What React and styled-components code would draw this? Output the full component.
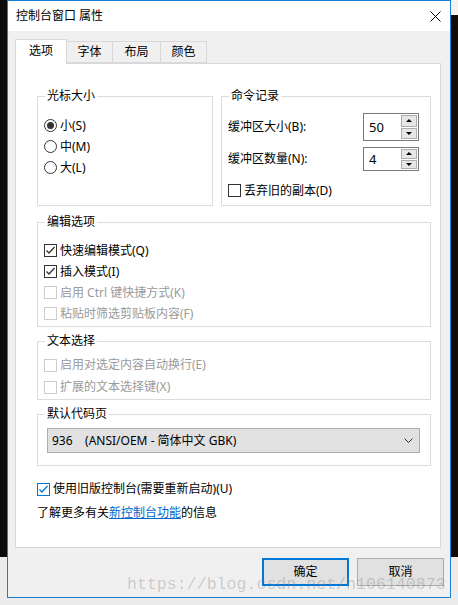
import React from 'react';
import styled, { createGlobalStyle } from 'styled-components';

// shared look
const ui = {
  font: '"Noto Sans", "Noto Sans CJK SC", sans-serif',
  text: '#000',
  disabled: '#9a9a9a',
  frame: '#dcdcdc',
  tabLine: '#d9d9d9',
  buttonFace: '#e1e1e1',
  buttonLine: '#adadad',
  accent: '#0078d7',
};

const GlobalStyle = createGlobalStyle`
  html, body {
    margin: 0;
    padding: 0;
    background: #0c0c0c;
  }
  body {
    font-family: ${ui.font};
    font-size: 12px;
    color: ${ui.text};
  }
`;

const Desktop = styled.div`
  position: relative;
  width: 458px;
  height: 605px;
  overflow: hidden;
  box-sizing: border-box;
  padding-left: 7px;
  background:
    linear-gradient(#f3f3f3, #f3f3f3) right top / 7px 15px no-repeat,
    linear-gradient(to bottom, #0c0c0c 0, #0c0c0c 557px, #ececec 557px, #ececec 100%);
`;

const Window = styled.div`
  width: 444px;
  height: 598px;
  box-sizing: border-box;
  border: 1px solid #1a7fd4;
  background: #f0f0f0;
  display: flex;
  flex-direction: column;
`;

const TitleBar = styled.div`
  height: 30px;
  background: #fff;
  display: flex;
  align-items: center;
  justify-content: space-between;
  padding: 0 9px 0 8px;
  line-height: 16px;
`;

const Body = styled.div`
  flex: 1;
  padding: 9px 0 0 7px;
  display: flex;
  flex-direction: column;
`;

const TabStrip = styled.div`
  display: flex;
  align-items: flex-end;
  height: 24px;
  position: relative;
  z-index: 1;
  margin-bottom: -1px;
`;

const Tab = styled.div`
  box-sizing: border-box;
  width: ${(p) => p.w}px;
  height: ${(p) => (p.active ? 25 : 22)}px;
  margin-left: ${(p) => (p.first ? 0 : -1)}px;
  margin-bottom: ${(p) => (p.active ? 0 : 1)}px;
  border: 1px solid ${ui.tabLine};
  border-bottom: ${(p) => (p.active ? 'none' : `1px solid ${ui.tabLine}`)};
  background: ${(p) => (p.active ? '#fff' : '#f0f0f0')};
  display: flex;
  justify-content: center;
  padding-top: ${(p) => (p.active ? 3 : 2)}px;
  line-height: 16px;
`;

const Panel = styled.div`
  box-sizing: border-box;
  width: 426px;
  height: 485px;
  border: 1px solid ${ui.tabLine};
  background: #fff;
  padding: 24px 0 0 21px;
  display: flex;
  flex-direction: column;
`;

const TopGroups = styled.div`
  display: flex;
  gap: 8px;
  height: 118px;
`;

// the legend sits 7px in from the frame whatever the inner padding is
const Group = styled.fieldset`
  box-sizing: border-box;
  margin: ${(p) => p.gap || 0}px 0 0 0;
  width: ${(p) => p.w || 394}px;
  height: ${(p) => p.h}px;
  min-width: 0;
  border: 1px solid ${ui.frame};
  padding: ${(p) => p.top}px ${(p) => p.right || 0}px 0 ${(p) => p.left}px;
  display: flex;
  flex-direction: column;

  & > legend {
    margin-left: ${(p) => 7 - p.left}px;
  }
`;

const Legend = styled.legend`
  padding: 0 2px;
  line-height: 16px;
`;

const Row = styled.label`
  display: flex;
  align-items: center;
  gap: 3px;
  height: ${(p) => p.h || 21}px;
  line-height: 16px;
  white-space: nowrap;
  color: ${(p) => (p.disabled ? ui.disabled : ui.text)};
`;

const RadioMark = styled.span`
  box-sizing: border-box;
  width: 13px;
  height: 13px;
  border: 1px solid #333;
  border-radius: 50%;
  display: flex;
  align-items: center;
  justify-content: center;
  flex: none;
  &::after {
    content: '';
    width: 7px;
    height: 7px;
    border-radius: 50%;
    background: ${(p) => (p.on ? '#333' : 'transparent')};
  }
`;

const CheckMark = styled.span`
  box-sizing: border-box;
  width: 13px;
  height: 13px;
  border: 1px solid ${(p) => p.line};
  background: #fff;
  display: flex;
  flex: none;
  svg {
    display: block;
  }
`;

const SpinRow = styled.div`
  display: flex;
  align-items: center;
  justify-content: space-between;
  height: ${(p) => p.h}px;
  margin-bottom: ${(p) => p.after || 0}px;
  line-height: 16px;
`;

const SpinBox = styled.div`
  box-sizing: border-box;
  width: 56px;
  height: ${(p) => p.h}px;
  border: 1px solid #7a7a7a;
  display: flex;
  align-items: stretch;
  background: #fff;
`;

const SpinValue = styled.span`
  flex: 1;
  display: flex;
  align-items: center;
  padding-left: 5px;
  font-size: 13px;
`;

const SpinButtons = styled.div`
  width: 16px;
  display: flex;
  flex-direction: column;
  gap: 1px;
  padding: 1px 1px 1px 0;
`;

const SpinButton = styled.span`
  flex: 1;
  border: 1px solid ${ui.buttonLine};
  background: #e6e6e6;
  display: flex;
  align-items: center;
  justify-content: center;
  &::after {
    content: '';
    border-left: 3px solid transparent;
    border-right: 3px solid transparent;
    ${(p) => (p.down ? 'border-top' : 'border-bottom')}: 3px solid #000;
  }
`;

const Select = styled.div`
  box-sizing: border-box;
  height: 25px;
  width: 373px;
  border: 1px solid ${ui.buttonLine};
  background: ${ui.buttonFace};
  display: flex;
  align-items: center;
  justify-content: space-between;
  padding: 0 6px 0 4px;
  white-space: pre;
  line-height: 16px;
`;

const InfoLine = styled.div`
  height: 20px;
  display: flex;
  align-items: center;
  margin-top: ${(p) => p.gap}px;
  line-height: 16px;
  white-space: nowrap;
`;

const Link = styled.a`
  color: #0066cc;
  text-decoration: underline;
  cursor: pointer;
`;

const ButtonBar = styled.div`
  display: flex;
  justify-content: flex-end;
  gap: 8px;
  margin-top: 10px;
  padding-right: 6px;
`;

const Button = styled.button`
  box-sizing: border-box;
  width: 87px;
  height: 28px;
  border: ${(p) => (p.primary ? `2px solid ${ui.accent}` : `1px solid ${ui.buttonLine}`)};
  background: ${ui.buttonFace};
  font: inherit;
  font-size: 12px;
  color: #000;
  padding: 0;
  line-height: 16px;
`;

const Watermark = styled.div`
  position: absolute;
  left: 127px;
  top: 575px;
  font-family: "Liberation Mono", monospace;
  font-size: 16.6px;
  line-height: 20px;
  color: rgba(120, 120, 120, 0.32);
  pointer-events: none;
  white-space: nowrap;
`;

function Check({ on, disabled, accent }) {
  const line = disabled ? '#cccccc' : accent ? ui.accent : '#333';
  return (
    <CheckMark line={line}>
      {on && (
        <svg width="11" height="11" viewBox="0 0 11 11">
          <polyline points="1.5,5.5 4,8 9.5,2" fill="none" stroke={accent ? ui.accent : '#333'} strokeWidth="1.3" />
        </svg>
      )}
    </CheckMark>
  );
}

function Spinner({ value, h, after, label }) {
  return (
    <SpinRow h={h} after={after}>
      <span>{label}</span>
      <SpinBox h={h}>
        <SpinValue>{value}</SpinValue>
        <SpinButtons>
          <SpinButton />
          <SpinButton down />
        </SpinButtons>
      </SpinBox>
    </SpinRow>
  );
}

const tabs = [
  { name: '选项', w: 52, active: true },
  { name: '字体', w: 47 },
  { name: '布局', w: 49 },
  { name: '颜色', w: 47 },
];

export default function App() {
  return (
    <Desktop>
      <GlobalStyle />
      <Window>
        <TitleBar>
          <span>控制台窗口 属性</span>
          <svg width="11" height="11" viewBox="0 0 11 11">
            <path d="M0.5 0.5 L10.5 10.5 M10.5 0.5 L0.5 10.5" stroke="#000" strokeWidth="1" />
          </svg>
        </TitleBar>
        <Body>
          <TabStrip>
            {tabs.map((t, i) => (
              <Tab key={t.name} w={t.w} active={t.active} first={i === 0}>
                {t.name}
              </Tab>
            ))}
          </TabStrip>
          <Panel>
            <TopGroups>
              <Group w={176} h={118} top={11} left={6}>
                <Legend>光标大小</Legend>
                <Row><RadioMark on />小(S)</Row>
                <Row><RadioMark />中(M)</Row>
                <Row><RadioMark />大(L)</Row>
              </Group>
              <Group w={210} h={118} top={9} right={11} left={6}>
                <Legend>命令记录</Legend>
                <Spinner label="缓冲区大小(B):" value="50" h={28} after={6} />
                <Spinner label="缓冲区数量(N):" value="4" h={24} after={9} />
                <Row h={21}><Check />丢弃旧的副本(D)</Row>
              </Group>
            </TopGroups>
            <Group gap={8} h={113} top={10} left={6}>
              <Legend>编辑选项</Legend>
              <Row><Check on />快速编辑模式(Q)</Row>
              <Row><Check on />插入模式(I)</Row>
              <Row disabled><Check disabled />启用 Ctrl 键快捷方式(K)</Row>
              <Row disabled><Check disabled />粘贴时筛选剪贴板内容(F)</Row>
            </Group>
            <Group gap={6} h={67} top={5} left={6}>
              <Legend>文本选择</Legend>
              <Row h={22} disabled><Check disabled />启用对选定内容自动换行(E)</Row>
              <Row h={22} disabled><Check disabled />扩展的文本选择键(X)</Row>
            </Group>
            <Group gap={6} h={60} top={6} left={9}>
              <Legend>默认代码页</Legend>
              <Select>
                <span>{'936    (ANSI/OEM - 简体中文 GBK)'}</span>
                <svg width="9" height="6" viewBox="0 0 9 6">
                  <polyline points="0.5,0.5 4.5,4.5 8.5,0.5" fill="none" stroke="#333" strokeWidth="1" />
                </svg>
              </Select>
            </Group>
            <InfoLine gap={13}>
              <Row as="span" h={20}><Check on accent />使用旧版控制台(需要重新启动)(U)</Row>
            </InfoLine>
            <InfoLine gap={4}>
              <span>了解更多有关<Link>新控制台功能</Link>的信息</span>
            </InfoLine>
          </Panel>
          <ButtonBar>
            <Button primary>确定</Button>
            <Button>取消</Button>
          </ButtonBar>
        </Body>
      </Window>
      <Watermark>https://blog.csdn.net/h106140873</Watermark>
    </Desktop>
  );
}
